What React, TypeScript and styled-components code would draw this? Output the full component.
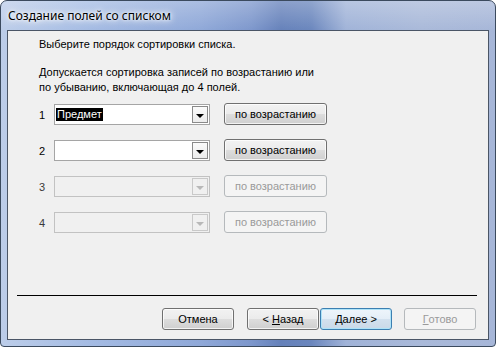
import React from "react";
import styled, { createGlobalStyle } from "styled-components";

const Global = createGlobalStyle`
  html, body { margin: 0; padding: 0; background: #ffffff; }
  body { font-family: "Liberation Sans", Arial, sans-serif; }
`;

const Window = styled.div`
  box-sizing: border-box;
  width: 496px;
  height: 347px;
  border: 1px solid #3b4a5e;
  border-radius: 7px 7px 4px 4px;
  background:
    linear-gradient(180deg, rgba(255,255,255,0.25) 0px, rgba(255,255,255,0) 30px),
    linear-gradient(90deg, #bccde9 0px, #a4bbe3 90px, #8fa8d8 200px, #7d97cc 250px, #6581ba 280px, #6a86bd 310px, #a0b3d8 345px, #a9b9d9 420px, #a6b6d8 496px);
  display: flex;
  flex-direction: column;
  overflow: hidden;
`;

const TitleBar = styled.div`
  height: 29px;
  display: flex;
  align-items: center;
  padding-left: 7px;
  font-family: "Noto Sans", "Liberation Sans", sans-serif;
  font-size: 12px;
  color: #000;
  text-shadow: 0 0 6px #ffffff, 0 0 10px #ffffff, 0 0 3px #ffffff;
`;

const Client = styled.div`
  box-sizing: border-box;
  margin: 0 6px 6px 6px;
  flex: 1;
  border: 1px solid #4a5566;
  background: #f0f0f0;
  display: flex;
  flex-direction: column;
  font-family: "Liberation Sans", Arial, sans-serif;
  font-size: 11px;
  color: #000;
`;

const Intro = styled.p`
  margin: 6px 0 0 31px;
  line-height: 15px;
`;

const Para = styled.p`
  margin: 13px 0 0 31px;
  line-height: 15px;
  width: 300px;
`;

const Rows = styled.div`
  display: flex;
  flex-direction: column;
  gap: 15px;
  margin: 9px 0 0 31px;
`;

const Row = styled.div`
  display: flex;
  align-items: center;
  height: 21px;
`;

const Num = styled.span<{ $disabled?: boolean }>`
  width: 15px;
  color: ${(p) => (p.$disabled ? "#3a3a3a" : "#000")};
`;

const Combo = styled.div<{ $disabled?: boolean }>`
  box-sizing: border-box;
  width: 156px;
  height: 21px;
  border: 1px solid ${(p) => (p.$disabled ? "#c2c2c2" : "#a5a5a5")};
  background: ${(p) => (p.$disabled ? "#f0f0f0" : "#ffffff")};
  display: flex;
  align-items: stretch;
  padding: 1px;
`;

const ComboText = styled.div`
  flex: 1;
  display: flex;
  align-items: center;
`;

const Selected = styled.span`
  background: #000;
  color: #fff;
  line-height: 13px;
  padding: 0 1px;
`;

const DropBtn = styled.div<{ $disabled?: boolean }>`
  box-sizing: border-box;
  width: 16px;
  border: 1px solid ${(p) => (p.$disabled ? "#c9c9c9" : "#8a8a8a")};
  background: ${(p) => (p.$disabled ? "#f0f0f0" : "linear-gradient(#fbfbfb, #ececec)")};
  display: flex;
  align-items: center;
  justify-content: center;
`;

const Arrow = styled.span<{ $disabled?: boolean }>`
  width: 0;
  height: 0;
  margin-top: 2px;
  border-left: 4px solid transparent;
  border-right: 4px solid transparent;
  border-top: 4px solid ${(p) => (p.$disabled ? "#b8b8b8" : "#000")};
`;

const Button = styled.div<{ $disabled?: boolean; $default?: boolean; $width?: number }>`
  box-sizing: border-box;
  width: ${(p) => p.$width ?? 72}px;
  height: 22px;
  border-radius: 3px;
  border: 1px solid
    ${(p) => (p.$disabled ? "#b5b9bc" : p.$default ? "#3c7fb1" : "#707070")};
  background: ${(p) =>
    p.$disabled
      ? "#f4f4f4"
      : p.$default
      ? "linear-gradient(#eef5fb 0%, #e4eef7 50%, #d3e1ee 51%, #cad9e8 100%)"
      : "linear-gradient(#f2f2f2 0%, #ebebeb 50%, #dddddd 51%, #cfcfcf 100%)"};
  box-shadow: ${(p) =>
    p.$disabled
      ? "none"
      : p.$default
      ? "inset 0 0 0 1px #aee3f8"
      : "inset 0 0 0 1px rgba(255,255,255,0.75)"};
  color: ${(p) => (p.$disabled ? "#9a9a9a" : "#000")};
  display: flex;
  align-items: center;
  justify-content: center;
  font-family: "Liberation Sans", Arial, sans-serif;
  font-size: 11px;
`;

const SortBtn = styled(Button)`
  margin-left: 14px;
  margin-top: -1px;
`;

const Separator = styled.div`
  margin: auto 11px 0 9px;
  height: 1px;
  background: #000;
`;

const Footer = styled.div`
  display: flex;
  align-items: center;
  margin: 12px 0 9px 154px;
`;

const Key = styled.span`
  text-decoration: underline;
`;

const Gap = styled.div<{ $w: number }>`
  width: ${(p) => p.$w}px;
`;

const rows = [
  { n: "1", value: "Предмет", disabled: false },
  { n: "2", value: "", disabled: false },
  { n: "3", value: "", disabled: true },
  { n: "4", value: "", disabled: true },
];

export default function App() {
  return (
    <>
      <Global />
      <Window>
        <TitleBar>Создание полей со списком</TitleBar>
        <Client>
          <Intro>Выберите порядок сортировки списка.</Intro>
          <Para>
            Допускается сортировка записей по возрастанию или
            <br />
            по убыванию, включающая до 4 полей.
          </Para>
          <Rows>
            {rows.map((r) => (
              <Row key={r.n}>
                <Num $disabled={r.disabled}>{r.n}</Num>
                <Combo $disabled={r.disabled}>
                  <ComboText>{r.value && <Selected>{r.value}</Selected>}</ComboText>
                  <DropBtn $disabled={r.disabled}>
                    <Arrow $disabled={r.disabled} />
                  </DropBtn>
                </Combo>
                <SortBtn $disabled={r.disabled} $width={103}>
                  по возрастанию
                </SortBtn>
              </Row>
            ))}
          </Rows>
          <Separator />
          <Footer>
            <Button>Отмена</Button>
            <Gap $w={13} />
            <Button>
              &lt;&nbsp;<Key>Н</Key>азад
            </Button>
            <Gap $w={1} />
            <Button $default>
              <Key>Д</Key>алее &gt;
            </Button>
            <Gap $w={12} />
            <Button $disabled>
              <Key>Г</Key>отово
            </Button>
          </Footer>
        </Client>
      </Window>
    </>
  );
}
